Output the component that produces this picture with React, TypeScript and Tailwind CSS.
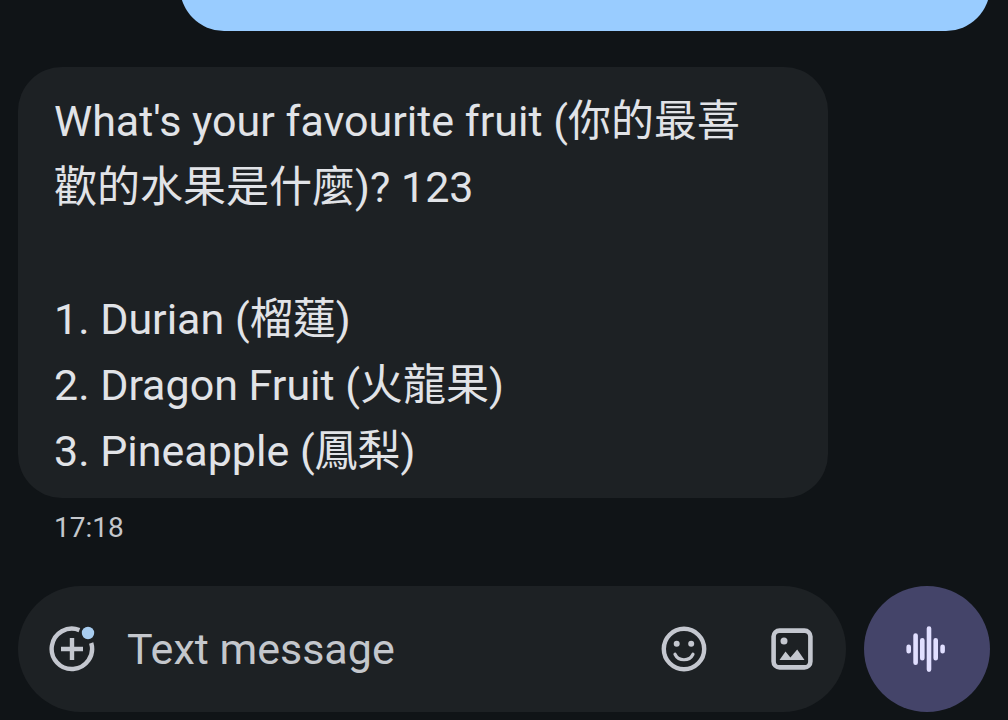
const message = `What's your favourite fruit (你的最喜歡的水果是什麼)? 123

1. Durian (榴蓮)
2. Dragon Fruit (火龍果)
3. Pineapple (鳳梨)`;

function AddIcon() {
  return (
    <svg className="h-12 w-12" viewBox="0 0 48 48" fill="none">
      <path
        d="M31.4 5.1A20.2 20.2 0 1 0 43.2 18"
        stroke="#c4c7cf"
        strokeWidth={4.4}
      />
      <path d="M24 13v22M13 24h22" stroke="#c4c7cf" strokeWidth={4.4} />
      <circle cx={40} cy={8} r={6.2} fill="#a8cdf0" />
    </svg>
  );
}

function EmojiIcon() {
  return (
    <svg className="h-12 w-12" viewBox="0 0 48 48" fill="none">
      <circle cx={24} cy={24} r={20.2} stroke="#c4c7cf" strokeWidth={4.4} />
      <circle cx={16.7} cy={18.7} r={3} fill="#c4c7cf" />
      <circle cx={31.2} cy={18.7} r={3} fill="#c4c7cf" />
      <path
        d="M15 29.2C18.5 36.6 29.5 36.6 33 29.2"
        stroke="#c4c7cf"
        strokeWidth={3.2}
        strokeLinecap="round"
      />
    </svg>
  );
}

function GalleryIcon() {
  return (
    <svg className="h-12 w-12" viewBox="0 0 48 48" fill="none">
      <rect
        x={5.6}
        y={5.6}
        width={36.8}
        height={36.8}
        rx={6}
        stroke="#c4c7cf"
        strokeWidth={4.6}
      />
      <circle cx={16} cy={16} r={3.5} fill="#c4c7cf" />
      <path d="M11.5 35l6-8.6 4.9 6L29.2 24.6 36.5 35z" fill="#c4c7cf" />
    </svg>
  );
}

function VoiceIcon() {
  return (
    <svg className="h-12 w-12" viewBox="0 0 48 48" fill="none">
      <path
        d="M5.7 21.7v4.6M12.6 10.5v27.3M19.3 15.2v18M26 3.6v41M32.7 15.2v18M39.6 21.7v4.6"
        stroke="#e1dfff"
        strokeWidth={4.6}
        strokeLinecap="round"
      />
    </svg>
  );
}

export default function App() {
  return (
    <main className="flex h-screen flex-col justify-end overflow-hidden bg-[#101417] px-[18px] pb-2 font-[Roboto,'Noto_Sans_CJK_TC',sans-serif]">
      {/* Sent message */}
      <div className="h-24 w-5/6 shrink-0 self-end rounded-[44px] bg-[#99ccff]"></div>

      {/* Received message */}
      <div className="mt-9 w-5/6 shrink-0 rounded-[44px] bg-[#1d2124] pt-[21px] pr-14 pb-[14px] pl-9">
        <p className="text-[43px] leading-[66px] whitespace-pre-wrap text-[#e1e3e7]">
          {message}
        </p>
      </div>
      <time className="mt-2 shrink-0 px-9 text-[28px] leading-[44px] text-[#c4c7cc]">
        17:18
      </time>

      {/* Composer */}
      <form
        className="mt-9 flex shrink-0 items-center gap-[18px]"
        onSubmit={(e) => e.preventDefault()}
      >
        <div className="flex h-[126px] min-w-0 flex-1 items-center rounded-full bg-[#1d2124] px-[30px]">
          <button type="button" aria-label="Add attachment">
            <AddIcon />
          </button>
          <input
            type="text"
            aria-label="Text message"
            placeholder="Text message"
            className="ml-[31px] min-w-0 flex-1 bg-transparent text-[43px] leading-[66px] text-[#e1e3e7] outline-none placeholder:text-[#c4c7cc]"
          />
          <button type="button" aria-label="Emoji">
            <EmojiIcon />
          </button>
          <button type="button" aria-label="Gallery" className="ml-[60px]">
            <GalleryIcon />
          </button>
        </div>
        <button
          type="button"
          aria-label="Record voice message"
          className="flex h-[126px] w-[126px] shrink-0 items-center justify-center rounded-full bg-[#444469]"
        >
          <VoiceIcon />
        </button>
      </form>
    </main>
  );
}
